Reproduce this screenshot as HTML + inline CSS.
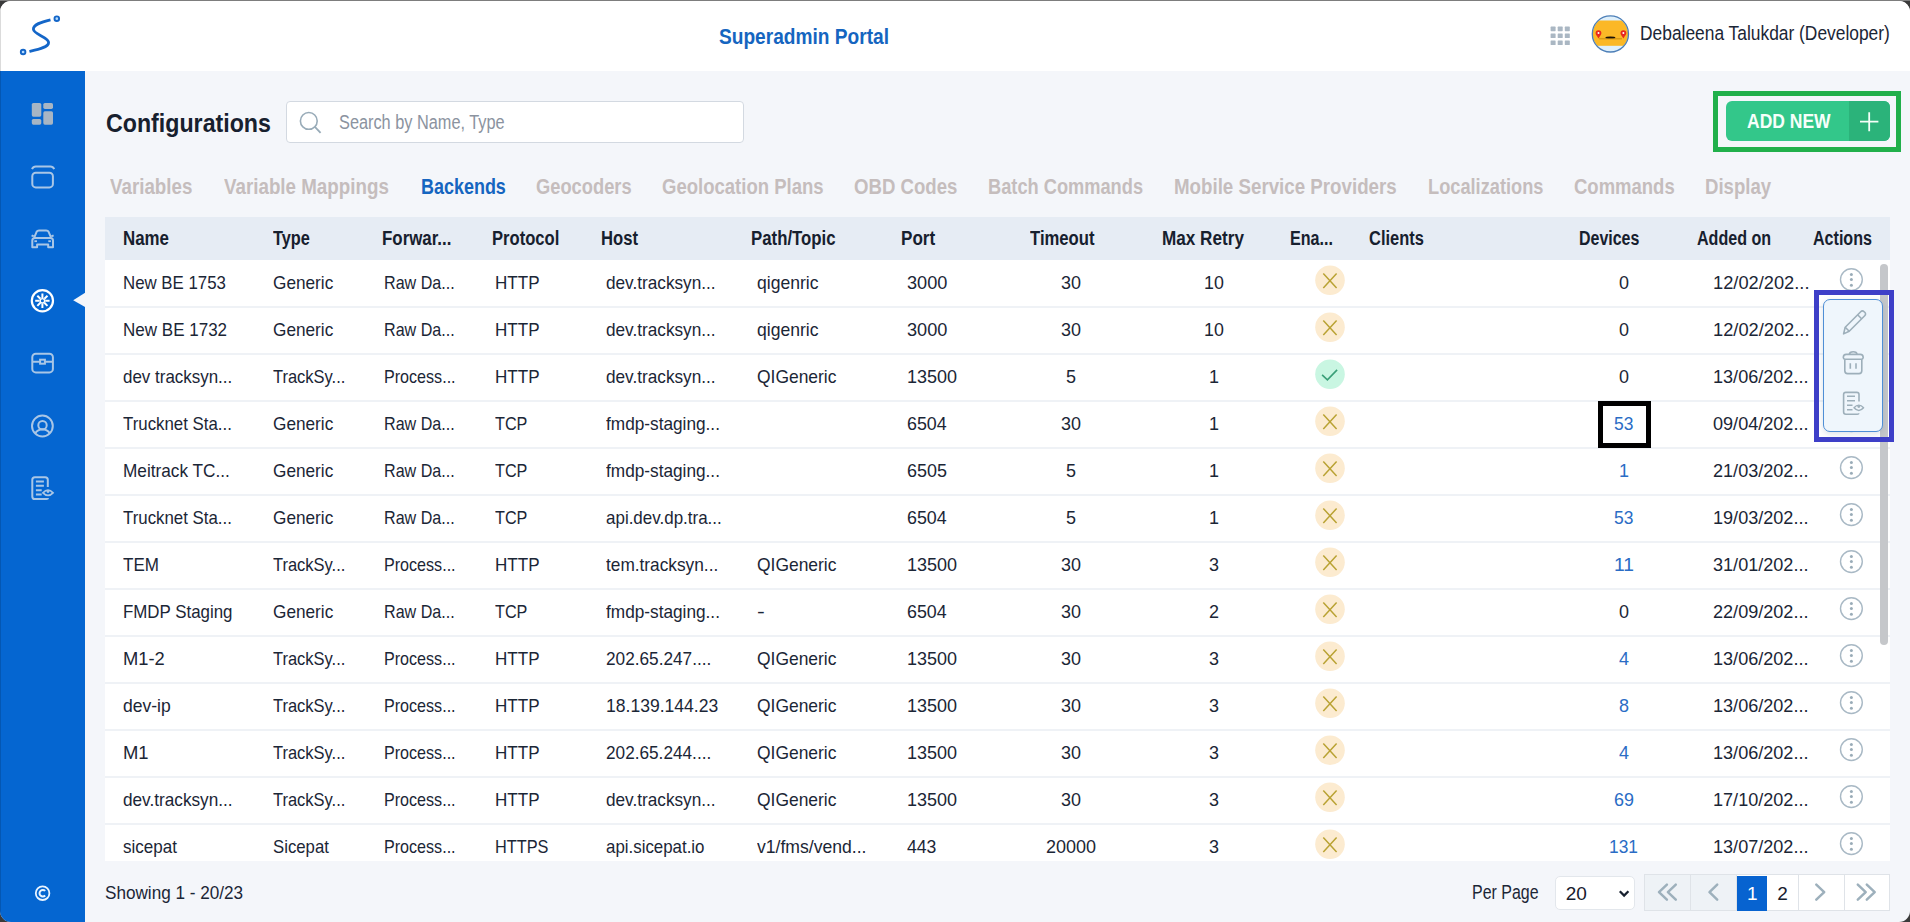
<!DOCTYPE html>
<html><head><meta charset="utf-8"><style>
*{margin:0;padding:0;box-sizing:border-box}
html,body{width:1910px;height:922px;overflow:hidden;background:#3a3a3a}
body{position:relative;font-family:"Liberation Sans",sans-serif}
.app{position:absolute;left:0;top:1px;width:1910px;height:921px;border-radius:11px;overflow:hidden;background:#f4f6fa}
.topline{position:absolute;left:0;top:0;width:1910px;height:1px;background:#7d7d7d}
.hdr{position:absolute;left:0;top:0;width:1910px;height:70px;background:#fff}
.side{position:absolute;left:0;top:70px;width:85px;height:851px;background:#0566d1}
.leftline{position:absolute;left:0;top:0;width:1px;height:921px;background:rgba(0,0,0,0.14)}
.t{position:absolute;white-space:nowrap;line-height:1}
.search{position:absolute;left:286px;top:99.5px;width:458px;height:42px;background:#fff;border:1px solid #d3d9e1;border-radius:4px}
.thead{position:absolute;left:105px;top:216px;width:1785px;height:43px;background:#e6ecf4}
.tbody{position:absolute;left:105px;top:259px;width:1785px;height:601px;background:#fff}
.sep{position:absolute;left:105px;width:1785px;height:2px;background:#eff2f6}
.scroll{position:absolute;left:1880px;top:262.5px;width:8px;height:381px;border-radius:4px;background:#c5c7ca}
.gbox{position:absolute;left:1713px;top:90px;width:188px;height:61px;border:5px solid #21b04b}
.btn{position:absolute;left:1726px;top:100.3px;width:164px;height:40px;border-radius:6px;background:#33c78a;overflow:hidden}
.btn .plus{position:absolute;right:0;top:0;width:41px;height:40px;background:#2bb37a}
.bbox{position:absolute;left:1814px;top:290px;width:80px;height:152px;border:5px solid #3e3fc8}
.pop{position:absolute;left:1823px;top:298.5px;width:60px;height:133px;border:1.5px solid #4f8fd6;border-radius:7px;background:#eff6fc;box-shadow:0 2px 6px rgba(60,90,130,0.18)}
.kbox{position:absolute;left:1598px;top:401px;width:53px;height:47px;border:5px solid #000}
.sel{position:absolute;left:1554.5px;top:874.5px;width:80px;height:34px;background:#fff;border:1px solid #e3e7ec;border-radius:5px}
.pager{position:absolute;left:1644px;top:873px;width:246px;height:37px;border:1px solid #dfe3e8;background:#fff}
.pc{position:absolute;top:0;height:35px}
</style></head><body>
<div class="topline"></div>
<div class="app">
<div class="hdr"></div>
<div class="side"></div>
<div class="search"></div>
<div class="thead"></div>
<div class="tbody"></div>
<div class="sep" style="top:305.00px"></div><div class="sep" style="top:352.00px"></div><div class="sep" style="top:399.00px"></div><div class="sep" style="top:446.00px"></div><div class="sep" style="top:493.00px"></div><div class="sep" style="top:540.00px"></div><div class="sep" style="top:587.00px"></div><div class="sep" style="top:634.00px"></div><div class="sep" style="top:681.00px"></div><div class="sep" style="top:728.00px"></div><div class="sep" style="top:775.00px"></div><div class="sep" style="top:822.00px"></div>
<div class="scroll"></div>
<div class="gbox"></div>
<div class="btn"><div class="plus"></div></div>
<div class="sel"></div>
<div class="pager">
 <div class="pc" style="left:0;width:46px;background:#eef2f6;border-right:1px solid #dfe3e8"></div>
 <div class="pc" style="left:46px;width:46px;background:#eef2f6;border-right:1px solid #dfe3e8"></div>
 <div class="pc" style="left:91.5px;top:0.5px;width:30px;height:35px;background:#0763d0"></div>
 <div class="pc" style="left:152.5px;width:1px;background:#dfe3e8"></div>
 <div class="pc" style="left:198.5px;width:1px;background:#dfe3e8"></div>
</div>
<div class="leftline"></div>
</div>
<div style="position:absolute;left:0;top:0;width:1910px;height:922px">
<div class="t" style="left:719.00px;top:25.75px;font-size:21.8px;color:#1565c0;transform:scaleX(0.8772);transform-origin:0 0;font-weight:700;">Superadmin Portal</div>
<div class="t" style="left:1639.60px;top:23.55px;font-size:19.9px;color:#1b2636;transform:scaleX(0.8736);transform-origin:0 0;">Debaleena Talukdar (Developer)</div>
<div class="t" style="left:105.70px;top:109.82px;font-size:26.2px;color:#17202e;transform:scaleX(0.8858);transform-origin:0 0;font-weight:700;">Configurations</div>
<div class="t" style="left:339.00px;top:112.79px;font-size:19.5px;color:#8b93a0;transform:scaleX(0.8365);transform-origin:0 0;">Search by Name, Type</div>
<div class="t" style="left:110.40px;top:176.36px;font-size:21.9px;color:#c5bdbd;transform:scaleX(0.8566);transform-origin:0 0;font-weight:700;">Variables</div>
<div class="t" style="left:224.40px;top:176.36px;font-size:21.9px;color:#c5bdbd;transform:scaleX(0.8576);transform-origin:0 0;font-weight:700;">Variable Mappings</div>
<div class="t" style="left:420.90px;top:176.36px;font-size:21.9px;color:#1565c0;transform:scaleX(0.8205);transform-origin:0 0;font-weight:700;">Backends</div>
<div class="t" style="left:536.20px;top:176.36px;font-size:21.9px;color:#c5bdbd;transform:scaleX(0.8363);transform-origin:0 0;font-weight:700;">Geocoders</div>
<div class="t" style="left:662.10px;top:176.36px;font-size:21.9px;color:#c5bdbd;transform:scaleX(0.8463);transform-origin:0 0;font-weight:700;">Geolocation Plans</div>
<div class="t" style="left:853.80px;top:176.36px;font-size:21.9px;color:#c5bdbd;transform:scaleX(0.8496);transform-origin:0 0;font-weight:700;">OBD Codes</div>
<div class="t" style="left:987.90px;top:176.36px;font-size:21.9px;color:#c5bdbd;transform:scaleX(0.8330);transform-origin:0 0;font-weight:700;">Batch Commands</div>
<div class="t" style="left:1174.40px;top:176.36px;font-size:21.9px;color:#c5bdbd;transform:scaleX(0.8553);transform-origin:0 0;font-weight:700;">Mobile Service Providers</div>
<div class="t" style="left:1427.90px;top:176.36px;font-size:21.9px;color:#c5bdbd;transform:scaleX(0.8325);transform-origin:0 0;font-weight:700;">Localizations</div>
<div class="t" style="left:1573.70px;top:176.36px;font-size:21.9px;color:#c5bdbd;transform:scaleX(0.8445);transform-origin:0 0;font-weight:700;">Commands</div>
<div class="t" style="left:1704.80px;top:176.36px;font-size:21.9px;color:#c5bdbd;transform:scaleX(0.8497);transform-origin:0 0;font-weight:700;">Display</div>
<div class="t" style="left:122.80px;top:227.62px;font-size:20.3px;color:#17202e;transform:scaleX(0.8323);transform-origin:0 0;font-weight:700;">Name</div>
<div class="t" style="left:272.80px;top:227.62px;font-size:20.3px;color:#17202e;transform:scaleX(0.8043);transform-origin:0 0;font-weight:700;">Type</div>
<div class="t" style="left:382.30px;top:227.62px;font-size:20.3px;color:#17202e;transform:scaleX(0.8325);transform-origin:0 0;font-weight:700;">Forwar...</div>
<div class="t" style="left:491.50px;top:227.62px;font-size:20.3px;color:#17202e;transform:scaleX(0.8188);transform-origin:0 0;font-weight:700;">Protocol</div>
<div class="t" style="left:601.00px;top:227.62px;font-size:20.3px;color:#17202e;transform:scaleX(0.8201);transform-origin:0 0;font-weight:700;">Host</div>
<div class="t" style="left:751.00px;top:227.62px;font-size:20.3px;color:#17202e;transform:scaleX(0.8283);transform-origin:0 0;font-weight:700;">Path/Topic</div>
<div class="t" style="left:901.00px;top:227.62px;font-size:20.3px;color:#17202e;transform:scaleX(0.8424);transform-origin:0 0;font-weight:700;">Port</div>
<div class="t" style="left:1030.30px;top:227.62px;font-size:20.3px;color:#17202e;transform:scaleX(0.8223);transform-origin:0 0;font-weight:700;">Timeout</div>
<div class="t" style="left:1161.60px;top:227.62px;font-size:20.3px;color:#17202e;transform:scaleX(0.8451);transform-origin:0 0;font-weight:700;">Max Retry</div>
<div class="t" style="left:1290.00px;top:227.62px;font-size:20.3px;color:#17202e;transform:scaleX(0.7941);transform-origin:0 0;font-weight:700;">Ena...</div>
<div class="t" style="left:1369.00px;top:227.62px;font-size:20.3px;color:#17202e;transform:scaleX(0.8109);transform-origin:0 0;font-weight:700;">Clients</div>
<div class="t" style="left:1579.00px;top:227.62px;font-size:20.3px;color:#17202e;transform:scaleX(0.7871);transform-origin:0 0;font-weight:700;">Devices</div>
<div class="t" style="left:1697.00px;top:227.62px;font-size:20.3px;color:#17202e;transform:scaleX(0.7929);transform-origin:0 0;font-weight:700;">Added on</div>
<div class="t" style="left:1813.00px;top:227.62px;font-size:20.3px;color:#17202e;transform:scaleX(0.7925);transform-origin:0 0;font-weight:700;">Actions</div>
<div class="t" style="left:122.80px;top:274.26px;font-size:18.6px;color:#1b2636;transform:scaleX(0.9056);transform-origin:0 0;">New BE 1753</div>
<div class="t" style="left:272.80px;top:274.26px;font-size:18.6px;color:#1b2636;transform:scaleX(0.9256);transform-origin:0 0;">Generic</div>
<div class="t" style="left:384.00px;top:274.26px;font-size:18.6px;color:#1b2636;transform:scaleX(0.8658);transform-origin:0 0;">Raw Da...</div>
<div class="t" style="left:495.00px;top:274.26px;font-size:18.6px;color:#1b2636;transform:scaleX(0.9167);transform-origin:0 0;">HTTP</div>
<div class="t" style="left:606.20px;top:274.26px;font-size:18.6px;color:#1b2636;transform:scaleX(0.9247);transform-origin:0 0;">dev.tracksyn...</div>
<div class="t" style="left:756.60px;top:274.26px;font-size:18.6px;color:#1b2636;transform:scaleX(0.9440);transform-origin:0 0;">qigenric</div>
<div class="t" style="left:906.90px;top:274.26px;font-size:18.6px;color:#1b2636;transform:scaleX(0.9762);transform-origin:0 0;">3000</div>
<div class="t" style="left:1061.40px;top:274.26px;font-size:18.6px;color:#1b2636;transform:scaleX(0.9665);transform-origin:0 0;">30</div>
<div class="t" style="left:1204.10px;top:274.26px;font-size:18.6px;color:#1b2636;transform:scaleX(0.9569);transform-origin:0 0;">10</div>
<div class="t" style="left:1618.71px;top:274.26px;font-size:18.6px;color:#1b2636;transform:scaleX(0.9671);transform-origin:0 0;">0</div>
<div class="t" style="left:1713.00px;top:274.26px;font-size:18.6px;color:#1b2636;transform:scaleX(0.9821);transform-origin:0 0;">12/02/202...</div>
<div class="t" style="left:122.80px;top:321.26px;font-size:18.6px;color:#1b2636;transform:scaleX(0.9155);transform-origin:0 0;">New BE 1732</div>
<div class="t" style="left:272.80px;top:321.26px;font-size:18.6px;color:#1b2636;transform:scaleX(0.9256);transform-origin:0 0;">Generic</div>
<div class="t" style="left:384.00px;top:321.26px;font-size:18.6px;color:#1b2636;transform:scaleX(0.8658);transform-origin:0 0;">Raw Da...</div>
<div class="t" style="left:495.00px;top:321.26px;font-size:18.6px;color:#1b2636;transform:scaleX(0.9167);transform-origin:0 0;">HTTP</div>
<div class="t" style="left:606.20px;top:321.26px;font-size:18.6px;color:#1b2636;transform:scaleX(0.9247);transform-origin:0 0;">dev.tracksyn...</div>
<div class="t" style="left:756.60px;top:321.26px;font-size:18.6px;color:#1b2636;transform:scaleX(0.9440);transform-origin:0 0;">qigenric</div>
<div class="t" style="left:906.90px;top:321.26px;font-size:18.6px;color:#1b2636;transform:scaleX(0.9762);transform-origin:0 0;">3000</div>
<div class="t" style="left:1061.40px;top:321.26px;font-size:18.6px;color:#1b2636;transform:scaleX(0.9665);transform-origin:0 0;">30</div>
<div class="t" style="left:1204.10px;top:321.26px;font-size:18.6px;color:#1b2636;transform:scaleX(0.9569);transform-origin:0 0;">10</div>
<div class="t" style="left:1618.71px;top:321.26px;font-size:18.6px;color:#1b2636;transform:scaleX(0.9671);transform-origin:0 0;">0</div>
<div class="t" style="left:1713.00px;top:321.26px;font-size:18.6px;color:#1b2636;transform:scaleX(0.9821);transform-origin:0 0;">12/02/202...</div>
<div class="t" style="left:122.80px;top:368.26px;font-size:18.6px;color:#1b2636;transform:scaleX(0.9114);transform-origin:0 0;">dev tracksyn...</div>
<div class="t" style="left:272.80px;top:368.26px;font-size:18.6px;color:#1b2636;transform:scaleX(0.8867);transform-origin:0 0;">TrackSy...</div>
<div class="t" style="left:384.00px;top:368.26px;font-size:18.6px;color:#1b2636;transform:scaleX(0.8660);transform-origin:0 0;">Process...</div>
<div class="t" style="left:495.00px;top:368.26px;font-size:18.6px;color:#1b2636;transform:scaleX(0.9167);transform-origin:0 0;">HTTP</div>
<div class="t" style="left:606.20px;top:368.26px;font-size:18.6px;color:#1b2636;transform:scaleX(0.9247);transform-origin:0 0;">dev.tracksyn...</div>
<div class="t" style="left:756.60px;top:368.26px;font-size:18.6px;color:#1b2636;transform:scaleX(0.9378);transform-origin:0 0;">QIGeneric</div>
<div class="t" style="left:906.90px;top:368.26px;font-size:18.6px;color:#1b2636;transform:scaleX(0.9689);transform-origin:0 0;">13500</div>
<div class="t" style="left:1066.41px;top:368.26px;font-size:18.6px;color:#1b2636;transform:scaleX(0.9671);transform-origin:0 0;">5</div>
<div class="t" style="left:1209.01px;top:368.26px;font-size:18.6px;color:#1b2636;transform:scaleX(0.9671);transform-origin:0 0;">1</div>
<div class="t" style="left:1618.71px;top:368.26px;font-size:18.6px;color:#1b2636;transform:scaleX(0.9671);transform-origin:0 0;">0</div>
<div class="t" style="left:1713.00px;top:368.26px;font-size:18.6px;color:#1b2636;transform:scaleX(0.9723);transform-origin:0 0;">13/06/202...</div>
<div class="t" style="left:122.80px;top:415.26px;font-size:18.6px;color:#1b2636;transform:scaleX(0.9056);transform-origin:0 0;">Trucknet Sta...</div>
<div class="t" style="left:272.80px;top:415.26px;font-size:18.6px;color:#1b2636;transform:scaleX(0.9256);transform-origin:0 0;">Generic</div>
<div class="t" style="left:384.00px;top:415.26px;font-size:18.6px;color:#1b2636;transform:scaleX(0.8658);transform-origin:0 0;">Raw Da...</div>
<div class="t" style="left:495.00px;top:415.26px;font-size:18.6px;color:#1b2636;transform:scaleX(0.8710);transform-origin:0 0;">TCP</div>
<div class="t" style="left:606.20px;top:415.26px;font-size:18.6px;color:#1b2636;transform:scaleX(0.9265);transform-origin:0 0;">fmdp-staging...</div>
<div class="t" style="left:906.90px;top:415.26px;font-size:18.6px;color:#1b2636;transform:scaleX(0.9593);transform-origin:0 0;">6504</div>
<div class="t" style="left:1061.40px;top:415.26px;font-size:18.6px;color:#1b2636;transform:scaleX(0.9665);transform-origin:0 0;">30</div>
<div class="t" style="left:1209.01px;top:415.26px;font-size:18.6px;color:#1b2636;transform:scaleX(0.9671);transform-origin:0 0;">1</div>
<div class="t" style="left:1614.00px;top:415.26px;font-size:18.6px;color:#2a6cc5;transform:scaleX(0.9375);transform-origin:0 0;">53</div>
<div class="t" style="left:1713.00px;top:415.26px;font-size:18.6px;color:#1b2636;transform:scaleX(0.9723);transform-origin:0 0;">09/04/202...</div>
<div class="t" style="left:122.80px;top:462.26px;font-size:18.6px;color:#1b2636;transform:scaleX(0.9254);transform-origin:0 0;">Meitrack TC...</div>
<div class="t" style="left:272.80px;top:462.26px;font-size:18.6px;color:#1b2636;transform:scaleX(0.9256);transform-origin:0 0;">Generic</div>
<div class="t" style="left:384.00px;top:462.26px;font-size:18.6px;color:#1b2636;transform:scaleX(0.8658);transform-origin:0 0;">Raw Da...</div>
<div class="t" style="left:495.00px;top:462.26px;font-size:18.6px;color:#1b2636;transform:scaleX(0.8710);transform-origin:0 0;">TCP</div>
<div class="t" style="left:606.20px;top:462.26px;font-size:18.6px;color:#1b2636;transform:scaleX(0.9265);transform-origin:0 0;">fmdp-staging...</div>
<div class="t" style="left:906.90px;top:462.26px;font-size:18.6px;color:#1b2636;transform:scaleX(0.9649);transform-origin:0 0;">6505</div>
<div class="t" style="left:1066.41px;top:462.26px;font-size:18.6px;color:#1b2636;transform:scaleX(0.9671);transform-origin:0 0;">5</div>
<div class="t" style="left:1209.01px;top:462.26px;font-size:18.6px;color:#1b2636;transform:scaleX(0.9671);transform-origin:0 0;">1</div>
<div class="t" style="left:1618.71px;top:462.26px;font-size:18.6px;color:#2a6cc5;transform:scaleX(0.9671);transform-origin:0 0;">1</div>
<div class="t" style="left:1713.00px;top:462.26px;font-size:18.6px;color:#1b2636;transform:scaleX(0.9723);transform-origin:0 0;">21/03/202...</div>
<div class="t" style="left:122.80px;top:509.26px;font-size:18.6px;color:#1b2636;transform:scaleX(0.9056);transform-origin:0 0;">Trucknet Sta...</div>
<div class="t" style="left:272.80px;top:509.26px;font-size:18.6px;color:#1b2636;transform:scaleX(0.9256);transform-origin:0 0;">Generic</div>
<div class="t" style="left:384.00px;top:509.26px;font-size:18.6px;color:#1b2636;transform:scaleX(0.8658);transform-origin:0 0;">Raw Da...</div>
<div class="t" style="left:495.00px;top:509.26px;font-size:18.6px;color:#1b2636;transform:scaleX(0.8710);transform-origin:0 0;">TCP</div>
<div class="t" style="left:606.20px;top:509.26px;font-size:18.6px;color:#1b2636;transform:scaleX(0.9129);transform-origin:0 0;">api.dev.dp.tra...</div>
<div class="t" style="left:906.90px;top:509.26px;font-size:18.6px;color:#1b2636;transform:scaleX(0.9593);transform-origin:0 0;">6504</div>
<div class="t" style="left:1066.41px;top:509.26px;font-size:18.6px;color:#1b2636;transform:scaleX(0.9671);transform-origin:0 0;">5</div>
<div class="t" style="left:1209.01px;top:509.26px;font-size:18.6px;color:#1b2636;transform:scaleX(0.9671);transform-origin:0 0;">1</div>
<div class="t" style="left:1614.00px;top:509.26px;font-size:18.6px;color:#2a6cc5;transform:scaleX(0.9375);transform-origin:0 0;">53</div>
<div class="t" style="left:1713.00px;top:509.26px;font-size:18.6px;color:#1b2636;transform:scaleX(0.9723);transform-origin:0 0;">19/03/202...</div>
<div class="t" style="left:122.80px;top:556.26px;font-size:18.6px;color:#1b2636;transform:scaleX(0.9147);transform-origin:0 0;">TEM</div>
<div class="t" style="left:272.80px;top:556.26px;font-size:18.6px;color:#1b2636;transform:scaleX(0.8867);transform-origin:0 0;">TrackSy...</div>
<div class="t" style="left:384.00px;top:556.26px;font-size:18.6px;color:#1b2636;transform:scaleX(0.8660);transform-origin:0 0;">Process...</div>
<div class="t" style="left:495.00px;top:556.26px;font-size:18.6px;color:#1b2636;transform:scaleX(0.9167);transform-origin:0 0;">HTTP</div>
<div class="t" style="left:606.20px;top:556.26px;font-size:18.6px;color:#1b2636;transform:scaleX(0.9285);transform-origin:0 0;">tem.tracksyn...</div>
<div class="t" style="left:756.60px;top:556.26px;font-size:18.6px;color:#1b2636;transform:scaleX(0.9378);transform-origin:0 0;">QIGeneric</div>
<div class="t" style="left:906.90px;top:556.26px;font-size:18.6px;color:#1b2636;transform:scaleX(0.9689);transform-origin:0 0;">13500</div>
<div class="t" style="left:1061.40px;top:556.26px;font-size:18.6px;color:#1b2636;transform:scaleX(0.9665);transform-origin:0 0;">30</div>
<div class="t" style="left:1209.01px;top:556.26px;font-size:18.6px;color:#1b2636;transform:scaleX(0.9671);transform-origin:0 0;">3</div>
<div class="t" style="left:1613.72px;top:556.26px;font-size:18.6px;color:#2a6cc5;transform:scaleX(1.0347);transform-origin:0 0;">11</div>
<div class="t" style="left:1713.00px;top:556.26px;font-size:18.6px;color:#1b2636;transform:scaleX(0.9723);transform-origin:0 0;">31/01/202...</div>
<div class="t" style="left:122.80px;top:603.26px;font-size:18.6px;color:#1b2636;transform:scaleX(0.9078);transform-origin:0 0;">FMDP Staging</div>
<div class="t" style="left:272.80px;top:603.26px;font-size:18.6px;color:#1b2636;transform:scaleX(0.9256);transform-origin:0 0;">Generic</div>
<div class="t" style="left:384.00px;top:603.26px;font-size:18.6px;color:#1b2636;transform:scaleX(0.8658);transform-origin:0 0;">Raw Da...</div>
<div class="t" style="left:495.00px;top:603.26px;font-size:18.6px;color:#1b2636;transform:scaleX(0.8710);transform-origin:0 0;">TCP</div>
<div class="t" style="left:606.20px;top:603.26px;font-size:18.6px;color:#1b2636;transform:scaleX(0.9265);transform-origin:0 0;">fmdp-staging...</div>
<div class="t" style="left:756.60px;top:603.26px;font-size:18.6px;color:#1b2636;transform:scaleX(1.2546);transform-origin:0 0;">-</div>
<div class="t" style="left:906.90px;top:603.26px;font-size:18.6px;color:#1b2636;transform:scaleX(0.9593);transform-origin:0 0;">6504</div>
<div class="t" style="left:1061.40px;top:603.26px;font-size:18.6px;color:#1b2636;transform:scaleX(0.9665);transform-origin:0 0;">30</div>
<div class="t" style="left:1209.01px;top:603.26px;font-size:18.6px;color:#1b2636;transform:scaleX(0.9671);transform-origin:0 0;">2</div>
<div class="t" style="left:1618.71px;top:603.26px;font-size:18.6px;color:#1b2636;transform:scaleX(0.9671);transform-origin:0 0;">0</div>
<div class="t" style="left:1713.00px;top:603.26px;font-size:18.6px;color:#1b2636;transform:scaleX(0.9723);transform-origin:0 0;">22/09/202...</div>
<div class="t" style="left:122.80px;top:650.26px;font-size:18.6px;color:#1b2636;transform:scaleX(0.9867);transform-origin:0 0;">M1-2</div>
<div class="t" style="left:272.80px;top:650.26px;font-size:18.6px;color:#1b2636;transform:scaleX(0.8867);transform-origin:0 0;">TrackSy...</div>
<div class="t" style="left:384.00px;top:650.26px;font-size:18.6px;color:#1b2636;transform:scaleX(0.8660);transform-origin:0 0;">Process...</div>
<div class="t" style="left:495.00px;top:650.26px;font-size:18.6px;color:#1b2636;transform:scaleX(0.9167);transform-origin:0 0;">HTTP</div>
<div class="t" style="left:606.20px;top:650.26px;font-size:18.6px;color:#1b2636;transform:scaleX(0.9263);transform-origin:0 0;">202.65.247....</div>
<div class="t" style="left:756.60px;top:650.26px;font-size:18.6px;color:#1b2636;transform:scaleX(0.9378);transform-origin:0 0;">QIGeneric</div>
<div class="t" style="left:906.90px;top:650.26px;font-size:18.6px;color:#1b2636;transform:scaleX(0.9689);transform-origin:0 0;">13500</div>
<div class="t" style="left:1061.40px;top:650.26px;font-size:18.6px;color:#1b2636;transform:scaleX(0.9665);transform-origin:0 0;">30</div>
<div class="t" style="left:1209.01px;top:650.26px;font-size:18.6px;color:#1b2636;transform:scaleX(0.9671);transform-origin:0 0;">3</div>
<div class="t" style="left:1618.71px;top:650.26px;font-size:18.6px;color:#2a6cc5;transform:scaleX(0.9671);transform-origin:0 0;">4</div>
<div class="t" style="left:1713.00px;top:650.26px;font-size:18.6px;color:#1b2636;transform:scaleX(0.9723);transform-origin:0 0;">13/06/202...</div>
<div class="t" style="left:122.80px;top:697.26px;font-size:18.6px;color:#1b2636;transform:scaleX(0.9420);transform-origin:0 0;">dev-ip</div>
<div class="t" style="left:272.80px;top:697.26px;font-size:18.6px;color:#1b2636;transform:scaleX(0.8867);transform-origin:0 0;">TrackSy...</div>
<div class="t" style="left:384.00px;top:697.26px;font-size:18.6px;color:#1b2636;transform:scaleX(0.8660);transform-origin:0 0;">Process...</div>
<div class="t" style="left:495.00px;top:697.26px;font-size:18.6px;color:#1b2636;transform:scaleX(0.9167);transform-origin:0 0;">HTTP</div>
<div class="t" style="left:606.20px;top:697.26px;font-size:18.6px;color:#1b2636;transform:scaleX(0.9441);transform-origin:0 0;">18.139.144.23</div>
<div class="t" style="left:756.60px;top:697.26px;font-size:18.6px;color:#1b2636;transform:scaleX(0.9378);transform-origin:0 0;">QIGeneric</div>
<div class="t" style="left:906.90px;top:697.26px;font-size:18.6px;color:#1b2636;transform:scaleX(0.9689);transform-origin:0 0;">13500</div>
<div class="t" style="left:1061.40px;top:697.26px;font-size:18.6px;color:#1b2636;transform:scaleX(0.9665);transform-origin:0 0;">30</div>
<div class="t" style="left:1209.01px;top:697.26px;font-size:18.6px;color:#1b2636;transform:scaleX(0.9671);transform-origin:0 0;">3</div>
<div class="t" style="left:1618.71px;top:697.26px;font-size:18.6px;color:#2a6cc5;transform:scaleX(0.9671);transform-origin:0 0;">8</div>
<div class="t" style="left:1713.00px;top:697.26px;font-size:18.6px;color:#1b2636;transform:scaleX(0.9723);transform-origin:0 0;">13/06/202...</div>
<div class="t" style="left:122.80px;top:744.26px;font-size:18.6px;color:#1b2636;transform:scaleX(0.9902);transform-origin:0 0;">M1</div>
<div class="t" style="left:272.80px;top:744.26px;font-size:18.6px;color:#1b2636;transform:scaleX(0.8867);transform-origin:0 0;">TrackSy...</div>
<div class="t" style="left:384.00px;top:744.26px;font-size:18.6px;color:#1b2636;transform:scaleX(0.8660);transform-origin:0 0;">Process...</div>
<div class="t" style="left:495.00px;top:744.26px;font-size:18.6px;color:#1b2636;transform:scaleX(0.9167);transform-origin:0 0;">HTTP</div>
<div class="t" style="left:606.20px;top:744.26px;font-size:18.6px;color:#1b2636;transform:scaleX(0.9252);transform-origin:0 0;">202.65.244....</div>
<div class="t" style="left:756.60px;top:744.26px;font-size:18.6px;color:#1b2636;transform:scaleX(0.9378);transform-origin:0 0;">QIGeneric</div>
<div class="t" style="left:906.90px;top:744.26px;font-size:18.6px;color:#1b2636;transform:scaleX(0.9689);transform-origin:0 0;">13500</div>
<div class="t" style="left:1061.40px;top:744.26px;font-size:18.6px;color:#1b2636;transform:scaleX(0.9665);transform-origin:0 0;">30</div>
<div class="t" style="left:1209.01px;top:744.26px;font-size:18.6px;color:#1b2636;transform:scaleX(0.9671);transform-origin:0 0;">3</div>
<div class="t" style="left:1618.71px;top:744.26px;font-size:18.6px;color:#2a6cc5;transform:scaleX(0.9671);transform-origin:0 0;">4</div>
<div class="t" style="left:1713.00px;top:744.26px;font-size:18.6px;color:#1b2636;transform:scaleX(0.9723);transform-origin:0 0;">13/06/202...</div>
<div class="t" style="left:122.80px;top:791.26px;font-size:18.6px;color:#1b2636;transform:scaleX(0.9247);transform-origin:0 0;">dev.tracksyn...</div>
<div class="t" style="left:272.80px;top:791.26px;font-size:18.6px;color:#1b2636;transform:scaleX(0.8867);transform-origin:0 0;">TrackSy...</div>
<div class="t" style="left:384.00px;top:791.26px;font-size:18.6px;color:#1b2636;transform:scaleX(0.8660);transform-origin:0 0;">Process...</div>
<div class="t" style="left:495.00px;top:791.26px;font-size:18.6px;color:#1b2636;transform:scaleX(0.9167);transform-origin:0 0;">HTTP</div>
<div class="t" style="left:606.20px;top:791.26px;font-size:18.6px;color:#1b2636;transform:scaleX(0.9247);transform-origin:0 0;">dev.tracksyn...</div>
<div class="t" style="left:756.60px;top:791.26px;font-size:18.6px;color:#1b2636;transform:scaleX(0.9378);transform-origin:0 0;">QIGeneric</div>
<div class="t" style="left:906.90px;top:791.26px;font-size:18.6px;color:#1b2636;transform:scaleX(0.9689);transform-origin:0 0;">13500</div>
<div class="t" style="left:1061.40px;top:791.26px;font-size:18.6px;color:#1b2636;transform:scaleX(0.9665);transform-origin:0 0;">30</div>
<div class="t" style="left:1209.01px;top:791.26px;font-size:18.6px;color:#1b2636;transform:scaleX(0.9671);transform-origin:0 0;">3</div>
<div class="t" style="left:1613.72px;top:791.26px;font-size:18.6px;color:#2a6cc5;transform:scaleX(0.9649);transform-origin:0 0;">69</div>
<div class="t" style="left:1713.00px;top:791.26px;font-size:18.6px;color:#1b2636;transform:scaleX(0.9723);transform-origin:0 0;">17/10/202...</div>
<div class="t" style="left:122.80px;top:838.26px;font-size:18.6px;color:#1b2636;transform:scaleX(0.9149);transform-origin:0 0;">sicepat</div>
<div class="t" style="left:272.80px;top:838.26px;font-size:18.6px;color:#1b2636;transform:scaleX(0.9012);transform-origin:0 0;">Sicepat</div>
<div class="t" style="left:384.00px;top:838.26px;font-size:18.6px;color:#1b2636;transform:scaleX(0.8660);transform-origin:0 0;">Process...</div>
<div class="t" style="left:495.00px;top:838.26px;font-size:18.6px;color:#1b2636;transform:scaleX(0.8776);transform-origin:0 0;">HTTPS</div>
<div class="t" style="left:606.20px;top:838.26px;font-size:18.6px;color:#1b2636;transform:scaleX(0.9072);transform-origin:0 0;">api.sicepat.io</div>
<div class="t" style="left:756.60px;top:838.26px;font-size:18.6px;color:#1b2636;transform:scaleX(0.9457);transform-origin:0 0;">v1/fms/vend...</div>
<div class="t" style="left:906.90px;top:838.26px;font-size:18.6px;color:#1b2636;transform:scaleX(0.9479);transform-origin:0 0;">443</div>
<div class="t" style="left:1046.35px;top:838.26px;font-size:18.6px;color:#1b2636;transform:scaleX(0.9689);transform-origin:0 0;">20000</div>
<div class="t" style="left:1209.01px;top:838.26px;font-size:18.6px;color:#1b2636;transform:scaleX(0.9671);transform-origin:0 0;">3</div>
<div class="t" style="left:1609.25px;top:838.26px;font-size:18.6px;color:#2a6cc5;transform:scaleX(0.9318);transform-origin:0 0;">131</div>
<div class="t" style="left:1713.00px;top:838.26px;font-size:18.6px;color:#1b2636;transform:scaleX(0.9723);transform-origin:0 0;">13/07/202...</div>
<div class="t" style="left:1746.90px;top:110.90px;font-size:20.2px;color:#f6fffa;transform:scaleX(0.8673);transform-origin:0 0;font-weight:700;">ADD NEW</div>
<div class="t" style="left:105.40px;top:884.10px;font-size:18.9px;color:#1b2636;transform:scaleX(0.9069);transform-origin:0 0;">Showing 1 - 20/23</div>
<div class="t" style="left:1472.40px;top:882.56px;font-size:19.3px;color:#1b2636;transform:scaleX(0.8275);transform-origin:0 0;">Per Page</div>
<div class="t" style="left:1565.70px;top:883.92px;font-size:19px;color:#17202e;letter-spacing:0.000px;">20</div>
<div class="t" style="left:1746.93px;top:884.12px;font-size:19px;color:#ffffff;letter-spacing:0.000px;">1</div>
<div class="t" style="left:1777.23px;top:884.12px;font-size:19px;color:#17202e;letter-spacing:0.000px;">2</div>
</div>
<svg style="position:absolute;left:0;top:0" width="1910" height="922" viewBox="0 0 1910 922">
<circle cx="1330" cy="280.20" r="14.8" fill="#fcebd0"/><path d="M1323.3 273.60L1336.6 287.90M1336.6 273.60L1323.3 287.90" stroke="#b9a233" stroke-width="1.5" fill="none"/><circle cx="1851.4" cy="279.60" r="10.9" fill="none" stroke="#a9b9c5" stroke-width="1.4"/><circle cx="1851.4" cy="274.40" r="1.5" fill="#9aacb8"/><circle cx="1851.4" cy="279.60" r="1.5" fill="#9aacb8"/><circle cx="1851.4" cy="285.30" r="1.5" fill="#9aacb8"/><circle cx="1330" cy="327.20" r="14.8" fill="#fcebd0"/><path d="M1323.3 320.60L1336.6 334.90M1336.6 320.60L1323.3 334.90" stroke="#b9a233" stroke-width="1.5" fill="none"/><circle cx="1851.4" cy="326.60" r="10.9" fill="none" stroke="#a9b9c5" stroke-width="1.4"/><circle cx="1851.4" cy="321.40" r="1.5" fill="#9aacb8"/><circle cx="1851.4" cy="326.60" r="1.5" fill="#9aacb8"/><circle cx="1851.4" cy="332.30" r="1.5" fill="#9aacb8"/><circle cx="1330" cy="374.20" r="14.8" fill="#c9f6e2"/><path d="M1322.1 374.90L1327.4 379.90L1337.1 369.90" stroke="#3a9f78" stroke-width="1.6" fill="none"/><circle cx="1851.4" cy="373.60" r="10.9" fill="none" stroke="#a9b9c5" stroke-width="1.4"/><circle cx="1851.4" cy="368.40" r="1.5" fill="#9aacb8"/><circle cx="1851.4" cy="373.60" r="1.5" fill="#9aacb8"/><circle cx="1851.4" cy="379.30" r="1.5" fill="#9aacb8"/><circle cx="1330" cy="421.20" r="14.8" fill="#fcebd0"/><path d="M1323.3 414.60L1336.6 428.90M1336.6 414.60L1323.3 428.90" stroke="#b9a233" stroke-width="1.5" fill="none"/><circle cx="1851.4" cy="420.60" r="10.9" fill="none" stroke="#a9b9c5" stroke-width="1.4"/><circle cx="1851.4" cy="415.40" r="1.5" fill="#9aacb8"/><circle cx="1851.4" cy="420.60" r="1.5" fill="#9aacb8"/><circle cx="1851.4" cy="426.30" r="1.5" fill="#9aacb8"/><circle cx="1330" cy="468.20" r="14.8" fill="#fcebd0"/><path d="M1323.3 461.60L1336.6 475.90M1336.6 461.60L1323.3 475.90" stroke="#b9a233" stroke-width="1.5" fill="none"/><circle cx="1851.4" cy="467.60" r="10.9" fill="none" stroke="#a9b9c5" stroke-width="1.4"/><circle cx="1851.4" cy="462.40" r="1.5" fill="#9aacb8"/><circle cx="1851.4" cy="467.60" r="1.5" fill="#9aacb8"/><circle cx="1851.4" cy="473.30" r="1.5" fill="#9aacb8"/><circle cx="1330" cy="515.20" r="14.8" fill="#fcebd0"/><path d="M1323.3 508.60L1336.6 522.90M1336.6 508.60L1323.3 522.90" stroke="#b9a233" stroke-width="1.5" fill="none"/><circle cx="1851.4" cy="514.60" r="10.9" fill="none" stroke="#a9b9c5" stroke-width="1.4"/><circle cx="1851.4" cy="509.40" r="1.5" fill="#9aacb8"/><circle cx="1851.4" cy="514.60" r="1.5" fill="#9aacb8"/><circle cx="1851.4" cy="520.30" r="1.5" fill="#9aacb8"/><circle cx="1330" cy="562.20" r="14.8" fill="#fcebd0"/><path d="M1323.3 555.60L1336.6 569.90M1336.6 555.60L1323.3 569.90" stroke="#b9a233" stroke-width="1.5" fill="none"/><circle cx="1851.4" cy="561.60" r="10.9" fill="none" stroke="#a9b9c5" stroke-width="1.4"/><circle cx="1851.4" cy="556.40" r="1.5" fill="#9aacb8"/><circle cx="1851.4" cy="561.60" r="1.5" fill="#9aacb8"/><circle cx="1851.4" cy="567.30" r="1.5" fill="#9aacb8"/><circle cx="1330" cy="609.20" r="14.8" fill="#fcebd0"/><path d="M1323.3 602.60L1336.6 616.90M1336.6 602.60L1323.3 616.90" stroke="#b9a233" stroke-width="1.5" fill="none"/><circle cx="1851.4" cy="608.60" r="10.9" fill="none" stroke="#a9b9c5" stroke-width="1.4"/><circle cx="1851.4" cy="603.40" r="1.5" fill="#9aacb8"/><circle cx="1851.4" cy="608.60" r="1.5" fill="#9aacb8"/><circle cx="1851.4" cy="614.30" r="1.5" fill="#9aacb8"/><circle cx="1330" cy="656.20" r="14.8" fill="#fcebd0"/><path d="M1323.3 649.60L1336.6 663.90M1336.6 649.60L1323.3 663.90" stroke="#b9a233" stroke-width="1.5" fill="none"/><circle cx="1851.4" cy="655.60" r="10.9" fill="none" stroke="#a9b9c5" stroke-width="1.4"/><circle cx="1851.4" cy="650.40" r="1.5" fill="#9aacb8"/><circle cx="1851.4" cy="655.60" r="1.5" fill="#9aacb8"/><circle cx="1851.4" cy="661.30" r="1.5" fill="#9aacb8"/><circle cx="1330" cy="703.20" r="14.8" fill="#fcebd0"/><path d="M1323.3 696.60L1336.6 710.90M1336.6 696.60L1323.3 710.90" stroke="#b9a233" stroke-width="1.5" fill="none"/><circle cx="1851.4" cy="702.60" r="10.9" fill="none" stroke="#a9b9c5" stroke-width="1.4"/><circle cx="1851.4" cy="697.40" r="1.5" fill="#9aacb8"/><circle cx="1851.4" cy="702.60" r="1.5" fill="#9aacb8"/><circle cx="1851.4" cy="708.30" r="1.5" fill="#9aacb8"/><circle cx="1330" cy="750.20" r="14.8" fill="#fcebd0"/><path d="M1323.3 743.60L1336.6 757.90M1336.6 743.60L1323.3 757.90" stroke="#b9a233" stroke-width="1.5" fill="none"/><circle cx="1851.4" cy="749.60" r="10.9" fill="none" stroke="#a9b9c5" stroke-width="1.4"/><circle cx="1851.4" cy="744.40" r="1.5" fill="#9aacb8"/><circle cx="1851.4" cy="749.60" r="1.5" fill="#9aacb8"/><circle cx="1851.4" cy="755.30" r="1.5" fill="#9aacb8"/><circle cx="1330" cy="797.20" r="14.8" fill="#fcebd0"/><path d="M1323.3 790.60L1336.6 804.90M1336.6 790.60L1323.3 804.90" stroke="#b9a233" stroke-width="1.5" fill="none"/><circle cx="1851.4" cy="796.60" r="10.9" fill="none" stroke="#a9b9c5" stroke-width="1.4"/><circle cx="1851.4" cy="791.40" r="1.5" fill="#9aacb8"/><circle cx="1851.4" cy="796.60" r="1.5" fill="#9aacb8"/><circle cx="1851.4" cy="802.30" r="1.5" fill="#9aacb8"/><circle cx="1330" cy="844.20" r="14.8" fill="#fcebd0"/><path d="M1323.3 837.60L1336.6 851.90M1336.6 837.60L1323.3 851.90" stroke="#b9a233" stroke-width="1.5" fill="none"/><circle cx="1851.4" cy="843.60" r="10.9" fill="none" stroke="#a9b9c5" stroke-width="1.4"/><circle cx="1851.4" cy="838.40" r="1.5" fill="#9aacb8"/><circle cx="1851.4" cy="843.60" r="1.5" fill="#9aacb8"/><circle cx="1851.4" cy="849.30" r="1.5" fill="#9aacb8"/>
<g transform="translate(15,10)" fill="none" stroke="#1466c8"><path d="M35.5 9.8C26 12 18.2 14.5 18.4 19.3C18.6 24.5 33.8 27 33.6 32.6C33.4 37.6 22 39.8 14.4 41.5" stroke-width="2.8" stroke-linecap="butt"/><circle cx="41.8" cy="8.7" r="2.3" stroke-width="1.9" fill="#b5dcff"/><circle cx="8.1" cy="42" r="2.3" stroke-width="1.9" fill="#b5dcff"/></g><g transform="translate(22,90)" fill="#a7b5c4"><rect x="9.8" y="13" width="9.5" height="13.7" rx="1.6"/><rect x="21.3" y="13" width="9.7" height="5.9" rx="1.6"/><rect x="9.8" y="28.9" width="9.5" height="5.8" rx="1.6"/><rect x="21.3" y="21.3" width="9.7" height="13.4" rx="1.6"/></g><g transform="translate(22,155)" fill="none" stroke="#a9c6e6" stroke-width="2"><rect x="10.3" y="17.7" width="20.6" height="14.7" rx="3.5"/><path d="M10 14.2Q11.2 11.6 13.8 11.6H28.4Q31 11.6 32.2 14.2"/></g><g transform="translate(22,218)" fill="none" stroke="#a9c6e6" stroke-width="2" stroke-linejoin="round"><path d="M12.2 19.6L14.6 13.8Q15.3 12.4 17 12.4H24.2Q25.9 12.4 26.6 13.8L29.1 19.6"/><path d="M10.3 29.3V22.6Q10.3 19.9 12.8 19.9H28.6Q31 19.9 31 22.6V29.3H26.2V26.4H15.1V29.3Z"/><path d="M9.6 17.3L11.8 18.4M31.6 17.3L29.4 18.4"/></g><g transform="translate(22,218)" fill="#a9c6e6"><rect x="12.4" y="22.3" width="2.6" height="1.8"/><rect x="26.3" y="22.3" width="2.6" height="1.8"/></g><g transform="translate(22,280)" fill="none" stroke="#ffffff"><circle cx="20.4" cy="20.8" r="10.6" stroke-width="2.2"/><path d="M23.20 20.80L27.60 20.80M22.38 22.78L25.49 25.89M20.40 23.60L20.40 28.00M18.42 22.78L15.31 25.89M17.60 20.80L13.20 20.80M18.42 18.82L15.31 15.71M20.40 18.00L20.40 13.60M22.38 18.82L25.49 15.71" stroke-width="2"/><circle cx="20.4" cy="20.8" r="2.9" fill="#fff" stroke="none"/><circle cx="20.4" cy="20.8" r="1.5" fill="#0566d1" stroke="none"/></g><polygon points="73.2,300.2 85.5,292.6 85.5,307.2" fill="#f4f6fa"/><g transform="translate(22,343)" fill="none" stroke="#a9c6e6" stroke-width="2"><rect x="10.3" y="10.8" width="20.6" height="18.6" rx="3.5"/><path d="M10.3 18.7H18.1M22.9 18.7H30.9"/><rect x="18.1" y="16.7" width="4.8" height="4"/></g><g transform="translate(22,406)" fill="none" stroke="#a9c6e6" stroke-width="2"><circle cx="20.4" cy="20" r="10.4"/><circle cx="20.5" cy="19.3" r="4.2"/><path d="M13.2 27.4Q15.8 23.3 20.5 23.3Q25.2 23.3 27.8 27.4"/></g><g transform="translate(22,468)" fill="none" stroke="#a9c6e6" stroke-width="2"><path d="M25.8 19V11.8Q25.8 9.2 23.2 9.2H12.9Q10.3 9.2 10.3 11.8V28.4Q10.3 31 12.9 31H24.5Q26 31 26 30"/><path d="M13.9 13.4H21.9M13.9 17.8H21.9M13.9 22.3H19.7M13.9 26.5H19.7"/><path d="M21 24.8Q26 19.6 31 24.8Q26 30 21 24.8Z" stroke-width="1.8"/><circle cx="26" cy="23.6" r="1.4" fill="#a9c6e6" stroke="none"/></g><g fill="none" stroke="#eaf4ff"><circle cx="42.6" cy="893.2" r="6.8" stroke-width="1.8"/><path d="M45.2 890.9A3.3 3.3 0 1 0 45.2 895.5" stroke-width="2"/></g>
<rect x="1550.6" y="26.6" width="5" height="4.6" rx="0.6" fill="#aab7c3"/><rect x="1557.7" y="26.6" width="5" height="4.6" rx="0.6" fill="#aab7c3"/><rect x="1564.8" y="26.6" width="5" height="4.6" rx="0.6" fill="#aab7c3"/><rect x="1550.6" y="33.5" width="5" height="4.6" rx="0.6" fill="#aab7c3"/><rect x="1557.7" y="33.5" width="5" height="4.6" rx="0.6" fill="#aab7c3"/><rect x="1564.8" y="33.5" width="5" height="4.6" rx="0.6" fill="#aab7c3"/><rect x="1550.6" y="40.4" width="5" height="4.6" rx="0.6" fill="#aab7c3"/><rect x="1557.7" y="40.4" width="5" height="4.6" rx="0.6" fill="#aab7c3"/><rect x="1564.8" y="40.4" width="5" height="4.6" rx="0.6" fill="#aab7c3"/><defs><clipPath id="av"><circle cx="1610.4" cy="33.9" r="17.7"/></clipPath></defs><circle cx="1610.4" cy="33.9" r="18.1" fill="#dff0fb"/><g clip-path="url(#av)"><rect x="1590" y="20.5" width="42" height="25.3" fill="#fbb826"/><ellipse cx="1610.4" cy="37.7" rx="5" ry="1.3" fill="#1a1208"/><rect x="1599" y="38.3" width="23" height="1" fill="#c98e10"/></g><circle cx="1610.4" cy="33.9" r="18.1" fill="none" stroke="#4d7fb8" stroke-width="1.3"/><path d="M1598.5 38.4C1596.3 35.2 1595.6 34.3 1595.6 33.1A2.9 2.9 0 0 1 1601.4 33.1C1601.4 34.3 1600.7 35.2 1598.5 38.4Z" fill="#e8281e"/><circle cx="1598.5" cy="33.1" r="1" fill="#fff"/><path d="M1623.4 38.4C1621.2 35.2 1620.5 34.3 1620.5 33.1A2.9 2.9 0 0 1 1626.3 33.1C1626.3 34.3 1625.6 35.2 1623.4 38.4Z" fill="#e8281e"/><circle cx="1623.4" cy="33.1" r="1" fill="#fff"/><g fill="none" stroke="#98abb8" stroke-width="1.6"><circle cx="308.8" cy="120.9" r="8.4"/><path d="M314.9 126.8L320.6 132.8" stroke-width="1.8"/></g><path d="M1869.2 112.3V131.3M1860 121.6H1878.4" stroke="#f4fff8" stroke-width="1.8"/>
<g fill="none" stroke="#9db0bc" stroke-width="2.5" stroke-linecap="round" stroke-linejoin="round"><path d="M1666.9 884.6L1659 892.1L1666.9 899.6M1675.8 884.6L1667.9 892.1L1675.8 899.6"/><path d="M1717.2 884.6L1709.5 892.1L1717.2 899.6"/><path d="M1816.3 884.6L1824.2 892.1L1816.3 899.6"/><path d="M1857.8 884.6L1865.7 892.1L1857.8 899.6M1866.8 884.6L1874.7 892.1L1866.8 899.6"/></g><path d="M1619.8 891.2L1624.1 895.5L1628.4 891.2" fill="none" stroke="#17202e" stroke-width="2.3" stroke-linecap="butt"/>
</svg>
<div class="bbox"></div>
<div class="pop"></div>
<svg style="position:absolute;left:0;top:0" width="1910" height="922"><g fill="none" stroke="#9dafba" stroke-width="1.6" stroke-linejoin="round"><path d="M1843.6 333.9L1845.2 327.2L1860.7 311.7Q1862.4 310 1864.1 311.7L1864.7 312.3Q1866.4 314 1864.7 315.7L1849.2 331.2Z"/><path d="M1845.2 327.2L1849.2 331.2M1857.6 314.8L1861.6 318.8"/><path d="M1843.3 357.6Q1843.3 354.4 1846.3 354.4H1860.2Q1863.2 354.4 1863.2 357.6Q1863.2 359.2 1861.6 359.2H1844.9Q1843.3 359.2 1843.3 357.6Z"/><path d="M1849.4 354.2Q1849.6 351.8 1853.2 351.8Q1856.8 351.8 1857 354.2"/><path d="M1844.8 359.3V370.8Q1844.8 373.6 1847.6 373.6H1859Q1861.8 373.6 1861.8 370.8V359.3"/><path d="M1850.3 363.2V368.8M1856 363.2V368.8"/><path d="M1859 401.5V394.6Q1859 392.4 1856.8 392.4H1845.8Q1843.6 392.4 1843.6 394.6V412Q1843.6 414.2 1845.8 414.2H1857.3Q1858.8 414.2 1858.8 413.2"/><path d="M1847 396.3H1855M1847 400.8H1855M1847 405.3H1852.5M1847 409.8H1852.5"/><path d="M1854 407.8Q1858.8 402.4 1863.6 407.8Q1858.8 413.2 1854 407.8Z" stroke-width="1.4"/></g><circle cx="1858.8" cy="406.6" r="1.4" fill="#9dafba"/></svg>
<div class="kbox"></div>
</body></html>
